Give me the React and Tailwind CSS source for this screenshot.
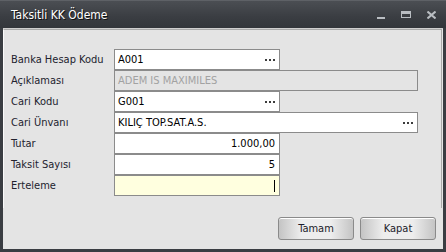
import React from 'react'

const font = { fontFamily: '"DejaVu Sans Condensed", "DejaVu Sans", sans-serif' }

function Dots() {
  return (
    <span className="flex gap-[2px] mr-[4px]">
      <span className="w-[2px] h-[2px] bg-[#3c3c3c]" />
      <span className="w-[2px] h-[2px] bg-[#3c3c3c]" />
      <span className="w-[2px] h-[2px] bg-[#3c3c3c]" />
    </span>
  )
}

function Row({ label, children }) {
  return (
    <div className="flex items-center h-[21px]">
      <span className="w-[103px] text-[11px] text-[#22222e] leading-none">{label}</span>
      {children}
    </div>
  )
}

function Field({ value = '', wide, lookup, right, disabled, yellow, caret }) {
  const width = wide ? 'w-[304px]' : 'w-[166px]'
  const bg = disabled ? 'bg-[#e4e4e4]' : yellow ? 'bg-[#ffffdf]' : 'bg-white'
  return (
    <div
      className={`${width} ${bg} h-[21px] border border-[#8b8b8b] flex items-center ${
        right ? 'justify-end pr-[4px]' : 'justify-between pl-[3px]'
      }`}
    >
      <span className={`text-[11px] leading-none ${disabled ? 'text-[#a2a2a2]' : 'text-black'}`}>{value}</span>
      {lookup && <Dots />}
      {caret && <span className="w-[1px] h-[12px] bg-black" />}
    </div>
  )
}

function Btn({ children }) {
  return (
    <button className="w-[76px] h-[23px] rounded-[3px] border border-[#8a8a8a] bg-[linear-gradient(to_right,#c4c4c4,#ededed_30%,#ededed_70%,#c4c4c4)] shadow-[inset_0_1px_0_#ffffff] text-[11px] text-[#1c1c2a] leading-none">
      {children}
    </button>
  )
}

export default function App() {
  return (
    <div className="w-[446px] h-[252px] bg-[#3a3d42] flex flex-col" style={font}>
      {/* title bar */}
      <div className="h-[28px] flex items-center justify-between border-t border-[#5e6166] bg-[linear-gradient(to_bottom,#4b4e53,#3a3d42_60%,#33363b)]">
        <span className="pl-[11px] text-[12px] text-white leading-none [text-shadow:1px_1px_0_#111]">
          Taksitli KK Ödeme
        </span>
        <div className="flex items-center gap-[16px] pr-[10px]">
          <span className="w-[8px] h-[2px] bg-[#b9bdc2] mt-[6px]" />
          <span className="w-[10px] h-[7px] border border-t-[3px] border-[#b9bdc2]" />
          <svg width="9" height="8" viewBox="0 0 9 8">
            <path d="M0.5 0.5 L8.5 7.5 M8.5 0.5 L0.5 7.5" stroke="#b9bdc2" strokeWidth="2" />
          </svg>
        </div>
      </div>

      {/* content */}
      <div className="flex-1 mx-[3px] mb-[3px] bg-[#e4e4e4] border-t border-[#cfcfcf] flex flex-col">
        <div className="h-[179px] border-l border-t border-l-[#fafafa] border-t-[#a9a9a9] border-r border-r-[#a9a9a9] mr-[1px] pl-[7px] pt-[19px] flex flex-col">
          <Row label="Banka Hesap Kodu">
            <Field value="A001" lookup />
          </Row>
          <Row label="Açıklaması">
            <Field value="ADEM IS MAXIMILES" wide disabled />
          </Row>
          <Row label="Cari Kodu">
            <Field value="G001" lookup />
          </Row>
          <Row label="Cari Ünvanı">
            <Field value="KILIÇ TOP.SAT.A.S." wide lookup />
          </Row>
          <Row label="Tutar">
            <Field value="1.000,00" right />
          </Row>
          <Row label="Taksit Sayısı">
            <Field value="5" right />
          </Row>
          <Row label="Erteleme">
            <Field yellow right caret />
          </Row>
        </div>
        <div className="flex justify-end gap-[6px] pr-[7px] pt-[9px]">
          <Btn>Tamam</Btn>
          <Btn>Kapat</Btn>
        </div>
      </div>
    </div>
  )
}
